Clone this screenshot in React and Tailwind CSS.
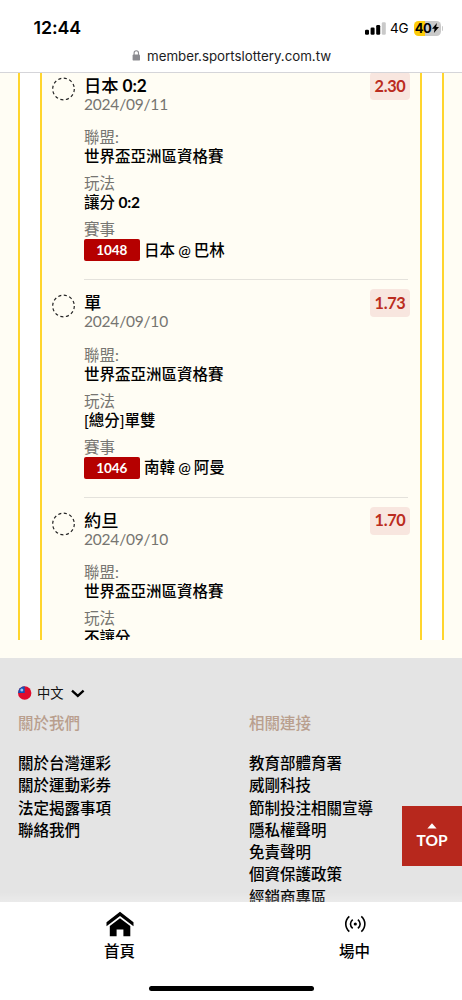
import React from 'react';

const bets = [
  { pick: '日本', line: '0:2', date: '2024/09/11', odds: '2.30', play: '讓分', playLine: '0:2', code: '1048', home: '日本', away: '巴林' },
  { pick: '單', date: '2024/09/10', odds: '1.73', play: '[總分]單雙', code: '1046', home: '南韓', away: '阿曼' },
  // the list is cut by its scroll area right after the play type of this one
  { pick: '約旦', date: '2024/09/10', odds: '1.70', play: '不讓分' },
];

const aboutLinks = ['關於台灣運彩', '關於運動彩券', '法定揭露事項', '聯絡我們'];
const relatedLinks = [
  '教育部體育署',
  '威剛科技',
  '節制投注相關宣導',
  '隱私權聲明',
  '免責聲明',
  '個資保護政策',
  '經銷商專區',
];

function StatusBar() {
  return (
    <div className="h-11 shrink-0 flex items-center justify-between pl-[33.5px] pr-[19px] pt-3 font-['Inter','Liberation_Sans',sans-serif] text-black">
      <span className="text-[17.8px] font-semibold tracking-[-0.1px]">12:44</span>
      <div className="flex items-center">
        <svg width="21" height="13" viewBox="0 0 21 13">
          <rect x="0" y="7.8" width="4" height="5" rx="1.2" />
          <rect x="5.6" y="5.6" width="4" height="7.2" rx="1.2" />
          <rect x="11.2" y="3" width="4" height="9.8" rx="1.2" />
          <rect x="16.8" y="0.2" width="4" height="12.6" rx="1.2" fill="#c9c9c9" />
        </svg>
        <span className="ml-[4.5px] w-[18.5px] text-[13.5px] leading-4 tracking-[-0.2px]">4G</span>
        <div className="ml-[5px] w-[27px] h-[15px] rounded-[4.5px] bg-[linear-gradient(90deg,#fdcc0a_41%,#c9c9c9_41%)] flex items-center justify-center">
          <span className="text-[13px] leading-[15px] font-bold tracking-[-0.6px]">40</span>
          <svg className="ml-px" width="7" height="10" viewBox="0 0 7 10">
            <path d="M4.9 0 0 5.8h2.6L1.9 10 7 4.1H4.2z" />
          </svg>
        </div>
        <div className="ml-px w-[1.5px] h-[5px] rounded-r-full bg-[#c9c9c9]" />
      </div>
    </div>
  );
}

function AddressBar() {
  return (
    <div className="h-[29px] shrink-0 flex items-start pt-1 pl-[132px] border-b border-[#d5d5d9] font-['Inter','Liberation_Sans',sans-serif]">
      <svg className="mt-[2px]" width="9" height="11" viewBox="0 0 9 11">
        <rect x="0.6" y="4.4" width="7.4" height="6.2" rx="1.2" fill="#8b8b90" />
        <path d="M2.1 5V2.9a2.2 2.2 0 0 1 4.4 0V5" fill="none" stroke="#8b8b90" strokeWidth="1.1" />
      </svg>
      <span className="ml-[6px] text-[13.3px] leading-[17px] text-[#1c1c1e]">member.sportslottery.com.tw</span>
    </div>
  );
}

function Field({ label, children }) {
  return (
    <div className="mb-2">
      <div className="h-[18px] leading-[18px] text-[#767571]">{label}</div>
      <div className="h-5 leading-[21px] font-medium text-black">{children}</div>
    </div>
  );
}

function BetRow({ bet }) {
  return (
    <div className="h-[217.4px] shrink-0 flex pl-[10px] pr-[10px]">
      <svg className="mt-[14px] shrink-0" width="24" height="24" viewBox="0 0 24 24">
        <circle cx="11.5" cy="12" r="10.8" fill="none" stroke="#222" strokeWidth="1.2" strokeDasharray="3.1 2.55" />
      </svg>
      <div className="ml-2 flex-1 pt-[13px] border-b border-[#e4e2dc] mr-[2px] text-[15.5px]">
        <div className="flex justify-between">
          <div className="h-[52.3px]">
            <div className="h-5 leading-5 text-[17.3px] font-medium text-black">
              {bet.pick}
              {bet.line && <span className="ml-1 font-bold tracking-[-0.2px]">{bet.line}</span>}
            </div>
            <div className="h-[18px] leading-[17px] tracking-[-0.2px] text-[#767571]">{bet.date}</div>
          </div>
          <div className="-mt-1 -mr-[2px] w-10 h-7 rounded-[4px] bg-[#f8e6df] flex items-center justify-center text-[16.3px] font-bold tracking-[-0.3px] text-[#bb2c20]">
            {bet.odds}
          </div>
        </div>
        <Field label="聯盟:">世界盃亞洲區資格賽</Field>
        <Field label="玩法">
          {bet.play}
          {bet.playLine && <span className="ml-[3.5px] font-bold tracking-[-0.2px]">{bet.playLine}</span>}
        </Field>
        {bet.code && (
          <>
            <div className="h-[18px] leading-[18px] text-[#767571]">賽事</div>
            <div className="mt-px flex items-center h-[22px] font-medium text-black">
              <span className="w-[55.5px] h-[22px] leading-[22px] rounded-[2px] bg-[#b50000] text-center text-[13.5px] font-bold tracking-[-0.1px] text-white">
                {bet.code}
              </span>
              <span className="ml-[4.5px] mt-px [word-spacing:-0.8px]">
                {bet.home} <span className="text-[15px]">@</span> {bet.away}
              </span>
            </div>
          </>
        )}
      </div>
    </div>
  );
}

function BetSlip() {
  return (
    <div className="h-[585px] shrink-0 px-[18px] bg-[#fffdf4]">
      <div className="h-[567px] border-x-2 border-[#ffd52e] bg-white px-5">
        <div className="h-full overflow-hidden border-x-2 border-[#ffd52e] bg-[#fffdf4]">
          <div className="-mt-[10.2px] flex flex-col">
            {bets.map((bet) => (
              <BetRow key={bet.odds} bet={bet} />
            ))}
          </div>
        </div>
      </div>
    </div>
  );
}

function LinkColumn({ title, links }) {
  return (
    <div className="w-[231px] shrink-0 text-[15.5px]">
      <div className="h-[22px] leading-[22px] text-[#b99f8e] font-medium">{title}</div>
      <div className="mt-[18px] font-medium text-black">
        {links.map((link) => (
          <div key={link} className="h-[22.3px] leading-[22.3px]">{link}</div>
        ))}
      </div>
    </div>
  );
}

function Footer() {
  return (
    <div className="relative h-[244px] shrink-0 overflow-hidden bg-[#e4e4e4] pl-[18px] pt-[27px]">
      <div className="flex items-center h-4">
        <svg width="14" height="14" viewBox="0 0 14 14">
          <circle cx="6.7" cy="7" r="6.7" fill="#e00b2d" />
          <path d="M0 7A6.7 6.7 0 0 1 6.7 0.3V7z" fill="#1451b4" />
          <circle cx="3.8" cy="4.1" r="1.5" fill="#9fc4ee" />
        </svg>
        <span className="ml-[5px] text-[13.3px] leading-4 text-[#111]">中文</span>
        <svg className="ml-[7px]" width="14" height="9" viewBox="0 0 14 9">
          <path d="M1 1.6 6.8 6.9l5.8-5.3" fill="none" stroke="#000" strokeWidth="2.3" />
        </svg>
      </div>
      <div className="mt-[11px] flex">
        <LinkColumn title="關於我們" links={aboutLinks} />
        <LinkColumn title="相關連接" links={relatedLinks} />
      </div>
      <div className="absolute inset-x-0 bottom-0 h-[10px] bg-gradient-to-b from-transparent to-white/25" />
      <button className="absolute right-0 top-[148px] w-[60px] h-[60px] bg-[#b7281d] text-white flex flex-col items-center">
        <svg className="mt-[17px]" width="10" height="6" viewBox="0 0 10 6">
          <path d="M5 0.3 9.6 5.6H0.4z" fill="#fff" />
        </svg>
        <span className="mt-px text-[15.5px] leading-5 font-bold">TOP</span>
      </button>
    </div>
  );
}

function BottomNav() {
  return (
    <div className="h-[98px] shrink-0 bg-white flex flex-col text-[15.5px] font-medium text-black">
      <div className="flex pl-[2px]">
        <div className="w-[235px] shrink-0 flex flex-col items-center">
          <svg className="mt-[9px]" width="28" height="26" viewBox="0 0 28 26">
            <path d="M14 0.8 27.5 11.2v4.1L14 5.1 0.5 15.3v-4.1z" />
            <path d="M14 7.3 24.3 15v10.3h-6.9v-6.9h-6.8v6.9H3.8V15z" />
          </svg>
          <span className="mt-[3px] leading-[22px]">首頁</span>
        </div>
        <div className="w-[235px] shrink-0 flex flex-col items-center">
          <svg className="mt-[12px]" width="22" height="20" viewBox="0 0 22 20" fill="none" stroke="#000" strokeWidth="1.6">
            <circle cx="11.3" cy="10" r="1.6" fill="#000" stroke="none" />
            <path d="M5.3 2.4C0.6 6.5 0.6 13.5 5.3 17.6M17.3 2.4c4.7 4.1 4.7 11.1 0 15.2" />
            <path d="M8.7 5.6c-3 2.6-3 6.2 0 8.8M13.9 5.6c3 2.6 3 6.2 0 8.8" />
          </svg>
          <span className="mt-[6px] leading-[22px]">場中</span>
        </div>
      </div>
      <div className="mt-auto mb-[9px] mx-auto w-[165px] h-[5px] rounded-full bg-black" />
    </div>
  );
}

export default function App() {
  return (
    <div className="w-[462px] h-[1000px] overflow-hidden flex flex-col bg-white font-['Lato','Noto_Sans_CJK_TC',sans-serif]">
      <StatusBar />
      <AddressBar />
      <BetSlip />
      <Footer />
      <BottomNav />
    </div>
  );
}
